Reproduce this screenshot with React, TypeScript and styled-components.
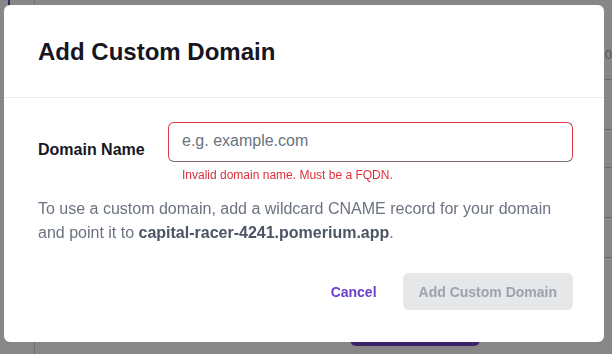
import React from 'react';
import styled, { createGlobalStyle } from 'styled-components';

const GlobalStyle = createGlobalStyle`
  html, body {
    margin: 0;
    padding: 0;
    width: 612px;
    height: 354px;
    overflow: hidden;
    font-family: "Liberation Sans", Arial, Helvetica, sans-serif;
    background: #ffffff;
  }
  * { box-sizing: border-box; }
`;

/* page that sits behind the dialog */
const BackPage = styled.div`
  width: 612px;
  height: 354px;
  display: flex;
  background: #ffffff;
`;

const SideRail = styled.div`
  width: 35px;
  border-right: 1px solid #d4d4d8;
  display: flex;
  justify-content: flex-end;
  padding-right: 24px;
`;

const RailMark = styled.div`
  width: 2px;
  height: 8px;
  background: #6f42c1;
`;

const BackContent = styled.div`
  flex: 1;
  display: flex;
  flex-direction: column;
  padding-top: 30px;
`;

const BackRow = styled.div<{ $h: number }>`
  height: ${({ $h }) => $h}px;
  border-bottom: 1px solid #c8c8cc;
  display: flex;
  justify-content: flex-end;
  align-items: center;
  font-size: 13px;
  color: #9ca3af;
`;

const BackFooter = styled.div`
  display: flex;
  justify-content: flex-start;
  padding-top: 50px;
  padding-left: 315px;
`;

const BackButton = styled.div`
  width: 130px;
  height: 38px;
  border-radius: 6px;
  background: #6f42c1;
`;

const Overlay = styled.div`
  position: fixed;
  inset: 0;
  background: rgba(0, 0, 0, 0.47);
  padding: 5px 8px 12px 4px;
  display: flex;
`;

const Dialog = styled.div`
  width: 600px;
  height: 337px;
  background: #ffffff;
  border-radius: 6px;
  display: flex;
  flex-direction: column;
`;

const Header = styled.header`
  height: 93px;
  border-bottom: 1px solid #ededf0;
  display: flex;
  align-items: center;
  padding: 2px 31px 0 34px;
`;

const Title = styled.h2`
  margin: 0;
  font-size: 24px;
  font-weight: 700;
  color: #161622;
`;

const Body = styled.div`
  padding: 24px 31px 0 34px;
`;

const FieldRow = styled.div`
  display: grid;
  grid-template-columns: 130px 1fr;
  align-items: start;
`;

const Label = styled.label`
  font-size: 16px;
  font-weight: 700;
  color: #17171f;
  padding-top: 19px;
`;

const FieldCol = styled.div`
  display: flex;
  flex-direction: column;
`;

const Input = styled.input`
  height: 40px;
  width: 100%;
  border: 1px solid #dc3a45;
  border-bottom-color: #7d6b72;
  border-radius: 6px;
  padding: 0 13px 3px;
  font-family: inherit;
  font-size: 16px;
  color: #111827;
  outline: none;

  &::placeholder {
    color: #6b7280;
  }
`;

const ErrorText = styled.div`
  font-size: 12px;
  color: #dc2f3c;
  margin-top: 6px;
  padding-left: 14px;
`;

const Help = styled.p`
  margin: 15px 0 0;
  font-size: 16px;
  line-height: 24px;
  color: #6b7280;

  strong {
    color: #4b5563;
    font-weight: 700;
  }
`;

const Footer = styled.div`
  margin-top: auto;
  display: flex;
  justify-content: flex-end;
  align-items: center;
  gap: 10px;
  padding: 0 31px 32px 34px;
`;

const Button = styled.button<{ $variant: 'text' | 'solid' }>`
  height: 37px;
  padding: 0 16px;
  border: none;
  border-radius: 6px;
  font-family: inherit;
  font-size: 14px;
  font-weight: 700;
  cursor: pointer;
  background: ${({ $variant }) => ($variant === 'solid' ? '#e5e7e8' : 'transparent')};
  color: ${({ $variant }) => ($variant === 'solid' ? '#9ca3af' : '#6d3fcf')};
`;

const App = () => {
  return (
    <>
      <GlobalStyle />
      <BackPage>
        <SideRail>
          <RailMark />
        </SideRail>
        <BackContent>
          <BackRow $h={50}>0</BackRow>
          <BackRow $h={50} />
          <BackRow $h={38} />
          <BackRow $h={50} />
          <BackRow $h={40} />
          <BackFooter>
            <BackButton />
          </BackFooter>
        </BackContent>
      </BackPage>
      <Overlay>
        <Dialog role="dialog">
          <Header>
            <Title>Add Custom Domain</Title>
          </Header>
          <Body>
            <FieldRow>
              <Label htmlFor="domain">Domain Name</Label>
              <FieldCol>
                <Input id="domain" placeholder="e.g. example.com" />
                <ErrorText>Invalid domain name. Must be a FQDN.</ErrorText>
              </FieldCol>
            </FieldRow>
            <Help>
              To use a custom domain, add a wildcard CNAME record for your domain
              and point it to <strong>capital-racer-4241.pomerium.app</strong>.
            </Help>
          </Body>
          <Footer>
            <Button $variant="text">Cancel</Button>
            <Button $variant="solid" disabled>
              Add Custom Domain
            </Button>
          </Footer>
        </Dialog>
      </Overlay>
    </>
  );
};

export default App;
